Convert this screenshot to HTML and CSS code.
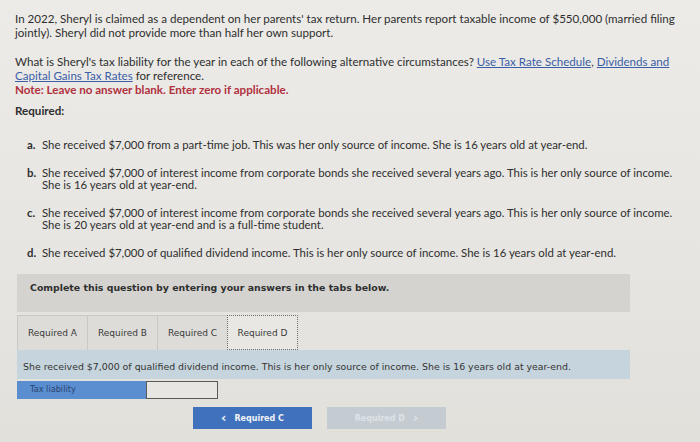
FILE: index.html
```html
<!DOCTYPE html>
<html>
<head>
<meta charset="utf-8">
<link rel="stylesheet" href="styles.css">
</head>
<body>
<div class="page">
  <p class="intro">In 2022, Sheryl is claimed as a dependent on her parents' tax return. Her parents report taxable income of $550,000 (married filing jointly). Sheryl did not provide more than half her own support.</p>
  <p class="question">What is Sheryl's tax liability for the year in each of the following alternative circumstances? <a href="#">Use Tax Rate Schedule</a>, <a href="#">Dividends and</a> <a href="#">Capital Gains Tax Rates</a> for reference.<br><span class="note">Note: Leave no answer blank. Enter zero if applicable.</span></p>
  <p class="required">Required:</p>
  <ol class="items">
    <li><b>a.</b><span>She received $7,000 from a part-time job. This was her only source of income. She is 16 years old at year-end.</span></li>
    <li><b>b.</b><span>She received $7,000 of interest income from corporate bonds she received several years ago. This is her only source of income. She is 16 years old at year-end.</span></li>
    <li><b>c.</b><span>She received $7,000 of interest income from corporate bonds she received several years ago. This is her only source of income. She is 20 years old at year-end and is a full-time student.</span></li>
    <li><b>d.</b><span>She received $7,000 of qualified dividend income. This is her only source of income. She is 16 years old at year-end.</span></li>
  </ol>
  <div class="answer">
    <div class="banner">Complete this question by entering your answers in the tabs below.</div>
    <div class="tabs">
      <div class="tab">Required A</div>
      <div class="tab">Required B</div>
      <div class="tab">Required C</div>
      <div class="tab active">Required D</div>
    </div>
    <div class="prompt">She received $7,000 of qualified dividend income. This is her only source of income. She is 16 years old at year-end.</div>
    <div class="row">
      <div class="label">Tax liability</div>
      <div class="input"></div>
    </div>
    <div class="nav">
      <div class="btn prev"><span class="chev">&lsaquo;</span> Required C</div>
      <div class="btn next">Required D <span class="chev">&rsaquo;</span></div>
    </div>
  </div>
</div>
</body>
</html>
```

FILE: styles.css
```css
html, body {
  margin: 0;
  padding: 0;
}
body {
  background: linear-gradient(180deg, #ecebe8 0%, #e6e5e1 60%, #e2e0db 100%);
  width: 700px;
  height: 442px;
  overflow: hidden;
  color: #2f2f2f;
  font-family: "Lato", "Open Sans", sans-serif;
}
.page {
  padding: 12px 18px 0 15px;
}
p {
  margin: 0;
}
.intro, .question {
  font-size: 11.6px;
  line-height: 14px;
}
.intro {
  margin-bottom: 15px;
}
.question a {
  color: #3b5ea6;
  text-decoration: underline;
}
.note {
  color: #b1313f;
  font-weight: bold;
}
.required {
  font-size: 11.6px;
  font-weight: bold;
  margin-top: 7px;
}
.items {
  list-style: none;
  margin: 22px 0 0 12px;
  padding: 0;
  font-size: 11.4px;
  line-height: 12.5px;
}
.items li {
  display: flex;
  gap: 4px;
  margin-bottom: 15px;
}
.items li b {
  width: 11px;
  flex: none;
}
.answer {
  font-family: "DejaVu Sans", Verdana, sans-serif;
  margin-left: 2px;
  width: 613px;
}
.banner {
  background: #d4d3d0;
  font-weight: bold;
  font-size: 9.4px;
  height: 38px;
  line-height: 28px;
  padding-left: 13px;
  margin-top: 11px;
}
.tabs {
  display: flex;
  margin-top: 3px;
  height: 35px;
}
.tab {
  width: 69px;
  border: 1px solid #c9c8c4;
  border-bottom: none;
  border-right: none;
  background: #dddcd8;
  font-size: 9px;
  color: #3a3a3a;
  display: flex;
  align-items: center;
  justify-content: center;
}
.tab.active {
  background: #e8e7e3;
  border: 1px dotted #6d6d6d;
}
.prompt {
  background: #c6d5dd;
  height: 29px;
  line-height: 33px;
  font-size: 9.4px;
  padding-left: 6px;
  color: #333;
}
.row {
  display: flex;
  margin-top: 2px;
  height: 18px;
}
.label {
  width: 116px;
  background: #5b8ed0;
  color: #2a4470;
  font-size: 8.2px;
  padding-left: 13px;
  line-height: 17px;
}
.input {
  width: 72px;
  background: #e7e6e3;
  border: 1px solid #5a5a5a;
  box-sizing: border-box;
}
.nav {
  display: flex;
  gap: 15px;
  margin: 8px 0 0 176px;
}
.btn {
  width: 119px;
  height: 22px;
  font-size: 8px;
  font-weight: bold;
  display: flex;
  align-items: center;
  justify-content: center;
  gap: 8px;
}
.btn .chev {
  font-size: 13px;
  font-weight: bold;
  line-height: 1;
  margin-top: -2px;
}
.prev {
  background: #3f71bd;
  color: #f2f4f8;
}
.next {
  background: #c5ccd1;
  color: #dde3e8;
}
```
